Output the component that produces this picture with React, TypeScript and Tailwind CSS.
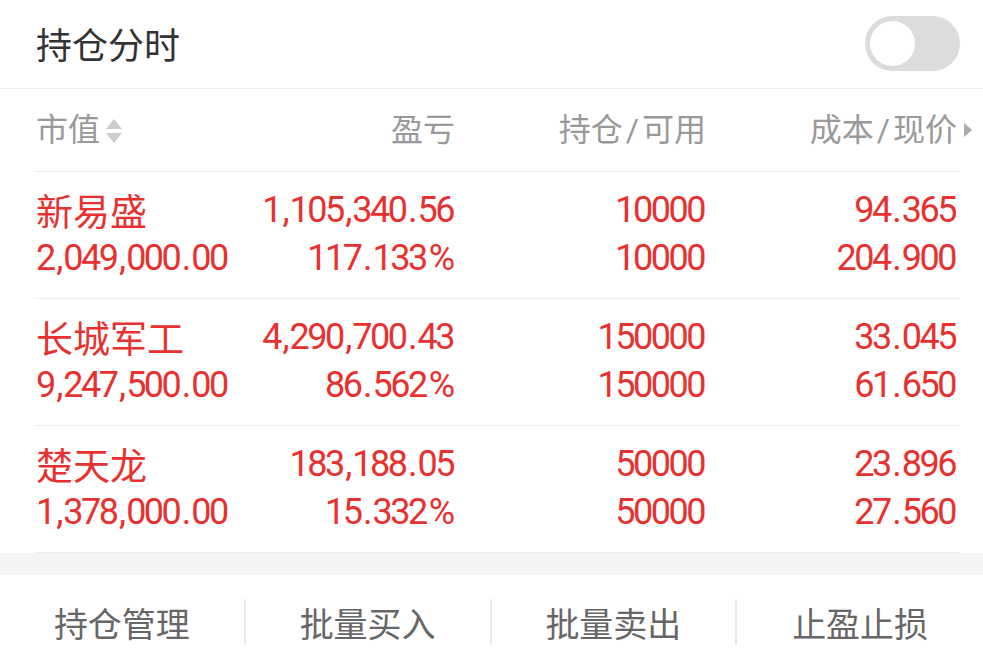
import { ReactNode } from "react";

const rows = [
  { name: "新易盛", value: "2,049,000.00", pl: "1,105,340.56", pct: "117.133%", hold: "10000", avail: "10000", cost: "94.365", price: "204.900" },
  { name: "长城军工", value: "9,247,500.00", pl: "4,290,700.43", pct: "86.562%", hold: "150000", avail: "150000", cost: "33.045", price: "61.650" },
  { name: "楚天龙", value: "1,378,000.00", pl: "183,188.05", pct: "15.332%", hold: "50000", avail: "50000", cost: "23.896", price: "27.560" },
];

const actions = ["持仓管理", "批量买入", "批量卖出", "止盈止损"];

// digits in the screenshot are narrow, but punctuation keeps its room
function Num({ children }: { children: string }) {
  const parts: ReactNode[] = children.split("").map((c, i) =>
    c === "," || c === "." ? (
      <span key={i} className="mx-[2.5px]">{c}</span>
    ) : c === "%" ? (
      <span key={i} className="ml-[3px] -mr-[2px] tracking-normal">{c}</span>
    ) : (
      <span key={i}>{c}</span>
    )
  );
  return <div className="text-[36px] leading-[48px] tracking-[-2.5px] whitespace-nowrap pr-[2px]">{parts}</div>;
}

export default function App() {
  return (
    <div className="w-[983px] h-[663px] overflow-hidden bg-white font-['Roboto','Noto_Sans_CJK_SC',sans-serif]">
      {/* header */}
      <div className="h-[89px] flex items-center justify-between pl-[36px] pr-[23px] border-b border-[#eeeeee]">
        <div className="text-[36px] text-[#333333] font-['Noto_Sans_CJK_SC',sans-serif] leading-none -mt-[2px]">持仓分时</div>
        <div className="w-[95px] h-[55px] rounded-full bg-[#dcdcdc] p-[5px] -mt-[1px]">
          <div className="w-[45px] h-[45px] rounded-full bg-white" />
        </div>
      </div>

      {/* table */}
      <div className="ml-[34px] mr-[23px]">
        <div className="h-[83px] grid grid-cols-[226px_193px_251px_251px] items-center pl-[2px] pr-[3px] border-b border-[#eeeeee] text-[32px] text-[#999999]">
          <div className="flex items-center">
            <span>市值</span>
            <svg width="18" height="28" viewBox="0 0 18 28" className="ml-[5px] mt-[2px]">
              <path d="M9 2 L17 12 L1 12 Z" fill="#cccccc" />
              <path d="M1 16 L17 16 L9 26 Z" fill="#cccccc" />
            </svg>
          </div>
          <div className="text-right">盈亏</div>
          <div className="text-right">持仓<span className="mx-[3px]">/</span>可用</div>
          <div className="text-right relative">
            成本<span className="mx-[3px]">/</span>现价
            <svg width="10" height="16" viewBox="0 0 10 16" className="absolute -right-[16px] top-1/2 -translate-y-1/2">
              <path d="M1 1 L9 8 L1 15 Z" fill="#aaaaaa" />
            </svg>
          </div>
        </div>

        {rows.map((r) => (
          <div
            key={r.name}
            className="grid grid-cols-[226px_193px_251px_251px] pl-[2px] pr-[3px] pt-[14px] pb-[16px] border-b border-[#eeeeee] text-[#e8312f]"
          >
            <div>
              <div className="text-[37px] leading-[48px] font-['Noto_Sans_CJK_SC',sans-serif]">{r.name}</div>
              <Num>{r.value}</Num>
            </div>
            <div className="text-right">
              <Num>{r.pl}</Num>
              <Num>{r.pct}</Num>
            </div>
            <div className="text-right">
              <Num>{r.hold}</Num>
              <Num>{r.avail}</Num>
            </div>
            <div className="text-right">
              <Num>{r.cost}</Num>
              <Num>{r.price}</Num>
            </div>
          </div>
        ))}
      </div>

      <div className="h-[22px] bg-[#f4f4f4]" />

      {/* bottom actions */}
      <div className="h-[88px] grid grid-cols-4 pt-[6px]">
        {actions.map((a, i) => (
          <div key={a} className="flex items-center">
            <div className="flex-1 text-center text-[34px] text-[#666666] font-['Noto_Sans_CJK_SC',sans-serif]">{a}</div>
            {i < actions.length - 1 && <div className="w-[2px] h-[46px] bg-[#ebebeb]" />}
          </div>
        ))}
      </div>
    </div>
  );
}
